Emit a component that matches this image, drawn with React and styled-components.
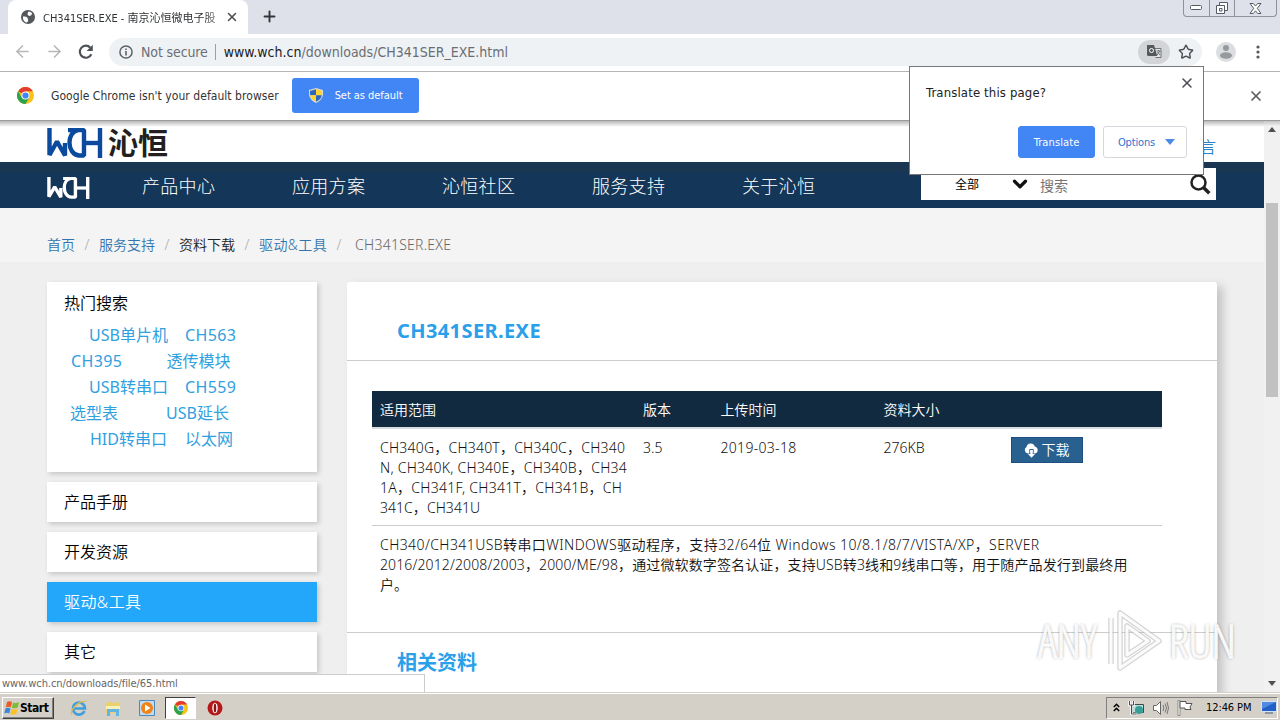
import React from 'react';
import styled, { createGlobalStyle, css } from 'styled-components';
import { X, Plus, ArrowLeft, ArrowRight, Star, ChevronDown } from 'lucide-react';

const uiFont = '"DejaVu Sans Condensed", "Noto Sans CJK SC", sans-serif';
const pageFont = '"Noto Sans", "Noto Sans CJK SC", sans-serif';

const navItems = ['产品中心', '应用方案', '沁恒社区', '服务支持', '关于沁恒'];

const hotRows = [
  { pad: 25, gap: 17, tags: ['USB单片机', 'CH563'] },
  { pad: 7, gap: 44, tags: ['CH395', '透传模块'] },
  { pad: 25, gap: 17, tags: ['USB转串口', 'CH559'] },
  { pad: 6, gap: 48, tags: ['选型表', 'USB延长'] },
  { pad: 26, gap: 18, tags: ['HID转串口', '以太网'] },
];

const sideLinks = [
  { label: '产品手册' },
  { label: '开发资源' },
  { label: '驱动&工具', active: true },
  { label: '其它' },
];

const chips = [
  ['CH340G，CH340T，CH340C，CH340', 0.21],
  ['N, CH340K, CH340E，CH340B，CH34', 0.24],
  ['1A，CH341F, CH341T，CH341B，CH', 0.26],
  ['341C，CH341U', 0.04],
];

function ChromeLogo({ size }) {
  return (
    <svg width={size} height={size} viewBox="0 0 24 24">
      <circle cx="12" cy="12" r="12" fill="#fbc116" />
      <path d="M12 12 1.6 6A12 12 0 0 1 22.4 6H12Z" fill="#e33b2e" />
      <path d="M1.6 6A12 12 0 0 0 12 24l5.2-9L12 12 6.8 15Z" fill="#2ba24c" />
      <circle cx="12" cy="12" r="5.6" fill="#fff" />
      <circle cx="12" cy="12" r="4.4" fill="#4285f4" />
    </svg>
  );
}

function WchMark({ width, height, color, weight }) {
  return (
    <svg width={width} height={height} viewBox="0 0 56 30" preserveAspectRatio="none">
      <g fill="none" stroke={color} strokeWidth={weight} strokeLinejoin="bevel">
        <path d="M2.500 0V27L10 13.500L18 27.500V15" />
        <path d="M21 2H37V27.500H32C19.500 26 19.500 4 31 2" />
        <path d="M37 15H53" />
        <path d="M53 0V30" />
      </g>
    </svg>
  );
}

function TabStrip() {
  return (
    <Strip>
      <Tab>
        <svg width="14" height="14" viewBox="0 0 14 14">
          <circle cx="7" cy="7" r="7" fill="#54585c" />
          <path d="M2 6.500c2 .3 4-.2 4.500 1.500s1 1.500.5 3-1 1.500-2 1.500C3 11.500 1.500 9.500 2 6.500ZM7 2c1.500-.6 3 0 4.200 1.400L10 5.500 8 6 6.500 4.500Z" fill="#fff" />
        </svg>
        <TabTitle>CH341SER.EXE - 南京沁恒微电子股</TabTitle>
        <X size={14} strokeWidth={2.600} color="#4b4f53" />
      </Tab>
      <NewTab><Plus size={17} strokeWidth={2.700} color="#33363a" /></NewTab>
      <WindowButtons>
        <WindowButton $w={25}>
          <svg width="13" height="6" viewBox="0 0 13 6"><rect x=".5" y=".5" width="11" height="4" rx="1" fill="#fff" stroke="#555b66" /></svg>
        </WindowButton>
        <WindowButton $w={25}>
          <svg width="14" height="13" viewBox="0 0 14 13" fill="#fff" stroke="#555b66">
            <path d="M4.500.5h8v8h-8z" /><path d="M1.500 3.500h8v8h-8z" /><path d="M4.500 6.500h2.500v2.500h-2.500z" />
          </svg>
        </WindowButton>
        <WindowButton $w={42}>
          <svg width="13" height="11" viewBox="0 0 13 11">
            <path d="M1 .5h3.300L6.500 3 8.700.5H12L8.300 5.300 12 10.500H8.700L6.500 7.800 4.300 10.500H1l3.700-5.200Z" fill="#fff" stroke="#555b66" />
          </svg>
        </WindowButton>
      </WindowButtons>
    </Strip>
  );
}

function Toolbar() {
  return (
    <Bar>
      <ToolIcon $w={32}><ArrowLeft size={19} color="#b4b6b9" strokeWidth={2} /></ToolIcon>
      <ToolIcon $w={32}><ArrowRight size={19} color="#b4b6b9" strokeWidth={2} /></ToolIcon>
      <ToolIcon $w={32}>
        <svg width="16" height="16" viewBox="0 0 16 16">
          <path d="M13.300 10.200A6 6 0 1 1 12.300 3.700" fill="none" stroke="#4e5256" strokeWidth="2.200" />
          <path d="M14.800.8V7H8.600Z" fill="#4e5256" />
        </svg>
      </ToolIcon>
      <Omnibox>
        <svg width="14" height="14" viewBox="0 0 14 14">
          <circle cx="7" cy="7" r="6.100" fill="none" stroke="#5f6368" strokeWidth="1.500" />
          <path d="M7 6v4.500M7 3.500v1.500" stroke="#5f6368" strokeWidth="1.600" />
        </svg>
        <Secure>Not secure</Secure>
        <Divider />
        <Url><b>www.wch.cn</b>/downloads/CH341SER_EXE.html</Url>
        <TranslateChip>
          <svg width="15" height="14" viewBox="0 0 15 14">
            <path d="M7 3.500h7v9H8.500" fill="#e4e5e7" stroke="#707377" />
            <path d="M0 0h7l3.300 11H1.500Q0 11 0 9.500Z" fill="#55595e" />
            <circle cx="4.500" cy="5.500" r="2" fill="none" stroke="#fff" />
            <path d="M9.500 6h4M11.500 5v1M10 10l3-4M10.500 7l2.500 3" stroke="#707377" fill="none" />
          </svg>
        </TranslateChip>
        <Star size={16} strokeWidth={2.200} color="#4e5256" />
      </Omnibox>
      <Avatar>
        <svg width="20" height="20" viewBox="0 0 20 20">
          <circle cx="10" cy="10" r="10" fill="#dcdde0" />
          <circle cx="10" cy="6" r="3" fill="#96999d" />
          <ellipse cx="10" cy="13.500" rx="6" ry="3.200" fill="#96999d" />
        </svg>
      </Avatar>
      <svg width="4" height="14" viewBox="0 0 4 14" fill="#55595d">
        <circle cx="2" cy="2" r="1.600" /><circle cx="2" cy="7" r="1.600" /><circle cx="2" cy="12" r="1.600" />
      </svg>
    </Bar>
  );
}

function InfoBar() {
  return (
    <Info>
      <ChromeLogo size={17} />
      <InfoText>Google Chrome isn't your default browser</InfoText>
      <DefaultButton>
        <svg width="14" height="15" viewBox="0 0 14 15">
          <path d="M7 0 14 2V7Q13 12 7 15Q1 12 0 7V2Z" fill="#d8dbd0" />
          <path d="M7 1.200V7.300H1.100L1 3Z" fill="#2f66bd" /><path d="M7 1.200V7.300H12.900L13 3Z" fill="#ffd52e" />
          <path d="M1.100 7.300H7V13.800Q2 11.500 1.100 7.300Z" fill="#ffd52e" /><path d="M12.900 7.300H7V13.800Q12 11.500 12.900 7.300Z" fill="#2f66bd" />
        </svg>
        Set as default
      </DefaultButton>
      <InfoClose><X size={16} strokeWidth={2.600} color="#5a5d61" /></InfoClose>
    </Info>
  );
}

function TranslatePopup() {
  return (
    <Popup>
      <PopupTop>
        <PopupTitle>Translate this page?</PopupTitle>
        <X size={16} strokeWidth={2.300} color="#4b4f53" />
      </PopupTop>
      <PopupActions>
        <PopupButton $primary>Translate</PopupButton>
        <PopupButton>
          Options
          <svg width="10" height="6" viewBox="0 0 10 6"><path d="M0 0h10L5 6Z" fill="#4b8ae8" /></svg>
        </PopupButton>
      </PopupActions>
    </Popup>
  );
}

function Sidebar() {
  return (
    <Side>
      <HotCard>
        <HotTitle>热门搜索</HotTitle>
        {hotRows.map((row) => (
          <HotRow key={row.tags[0]} $pad={row.pad} $gap={row.gap}>
            {row.tags.map((tag) => <HotTag key={tag} $wide={tag.startsWith('CH')}>{tag}</HotTag>)}
          </HotRow>
        ))}
      </HotCard>
      {sideLinks.map((item) => (
        <SideLink key={item.label} $active={item.active}>{item.label}</SideLink>
      ))}
    </Side>
  );
}

function Detail() {
  return (
    <Panel>
      <PanelTitle>CH341SER.EXE</PanelTitle>
      <TableArea>
        <HeadRow>
          <span>适用范围</span>
          <span>版本</span>
          <span>上传时间</span>
          <span>资料大小</span>
          <span />
        </HeadRow>
        <DataRow>
          <div>
            {chips.map(([line, spacing]) => <ChipLine key={line} $spacing={spacing}>{line}</ChipLine>)}
          </div>
          <span>3.5</span>
          <DateCell>2019-03-18</DateCell>
          <span>276KB</span>
          <Download>
            <svg width="15" height="15" viewBox="0 0 15 15">
              <path d="M4 10.500A3.500 3.500 0 0 1 2.500 4 4.300 4.300 0 0 1 10.800 3.500 3.600 3.600 0 0 1 11 10.500Z" fill="#fff" />
              <path d="M5.800 11V6.500h3.400V11" stroke="#286090" fill="none" />
              <path d="M6.500 7h2v4h2.500L7.500 14.800 4 11h2.500Z" fill="#fff" />
            </svg>
            下载
          </Download>
        </DataRow>
        <Description>
          <DescLine $spacing={0.42}>CH340/CH341USB转串口WINDOWS驱动程序，支持32/64位 Windows 10/8.1/8/7/VISTA/XP，SERVER</DescLine>
          <DescLine $spacing={0.13}>2016/2012/2008/2003，2000/ME/98，通过微软数字签名认证，支持USB转3线和9线串口等，用于随产品发行到最终用</DescLine>
          <DescLine>户。</DescLine>
        </Description>
      </TableArea>
      <Related>相关资料</Related>
    </Panel>
  );
}

function Watermark() {
  return (
    <Mark>
      <span>ANY</span>
      <svg width="60" height="66" viewBox="0 0 60 66">
        <g fill="none" strokeLinejoin="round">
          <path d="M6 10V56M15 5V60L54 33ZM22 18V47L43 33Z" stroke="#b0b0b0" strokeWidth="5.500" opacity=".55" />
          <path d="M6 10V56M15 5V60L54 33ZM22 18V47L43 33Z" stroke="#fff" strokeWidth="3" opacity=".9" />
        </g>
      </svg>
      <span>RUN</span>
    </Mark>
  );
}

function Taskbar() {
  return (
    <Task>
      <StartButton>
        <svg width="16" height="16" viewBox="0 0 16 16">
          <path d="M3 2Q5.500.5 8 2L6.800 7.300Q4.300 6 1.800 7.300Z" fill="#ec5b25" />
          <path d="M9 2.400Q12 3.800 15 2L13.800 7.500Q11 9 7.800 7.700Z" fill="#7fbb38" />
          <path d="M1.500 8.500Q4 7 6.500 8.400L5.300 13.500Q3 12.200.3 13.500Z" fill="#3b86d8" />
          <path d="M7.600 8.900Q10.500 10 13.500 8.700L12.200 14Q9.500 15.500 6.400 14Z" fill="#fcc021" />
        </svg>
        Start
      </StartButton>
      <TaskIcon $w={34}>
        <svg width="18" height="18" viewBox="0 0 18 18">
          <path d="M14.500 12A6 6 0 1 1 15 9.500H4" fill="none" stroke="#3f9fdc" strokeWidth="2.600" />
          <path d="M2 15.500C-.5 12 8 1.500 16 2.500" fill="none" stroke="#e5bb45" strokeWidth="1.300" />
        </svg>
      </TaskIcon>
      <TaskIcon $w={34}>
        <svg width="16" height="16" viewBox="0 0 16 16">
          <path d="M1 3 6 1.500l1 1.500 8-1v11H1Z" fill="#ecd06a" /><path d="M1 6h14v3H1Z" fill="#faf0ba" />
          <path d="M2 9h12v7h-3v-4H5v4H2Z" fill="#63b4df" />
        </svg>
      </TaskIcon>
      <TaskIcon $w={34}>
        <svg width="16" height="16" viewBox="0 0 16 16">
          <path d="M.5.5h15v15H.5z" fill="#c1dcf2" stroke="#4c88bc" />
          <circle cx="8" cy="8" r="6" fill="#ef8318" /><path d="M6 4.500v7L11.500 8Z" fill="#fff" />
        </svg>
      </TaskIcon>
      <ActiveTask><ChromeLogo size={14} /></ActiveTask>
      <TaskIcon $w={37}>
        <svg width="16" height="16" viewBox="0 0 16 16">
          <circle cx="8" cy="8" r="7.500" fill="#b51818" /><ellipse cx="8" cy="8" rx="2.700" ry="5.200" fill="#fff" />
          <ellipse cx="8" cy="8" rx="1.300" ry="4.500" fill="#8c1212" />
        </svg>
      </TaskIcon>
      <Tray>
        <svg width="7" height="9" viewBox="0 0 7 9"><path d="M.8 4 3.500 1.300 6.200 4M.8 8 3.500 5.300 6.200 8" stroke="#000" strokeWidth="1.500" fill="none" /></svg>
        <svg width="17" height="16" viewBox="0 0 17 16">
          <path d="M4.500 4.500h11v8h-11z" fill="#b5dfdc" stroke="#404a4a" />
          <circle cx="11" cy="10" r="4" fill="#36a098" />
          <path d="M1.500 1v4h4V1M3.500 5v9h5" fill="none" stroke="#fff" strokeWidth="2.500" />
          <path d="M1.500 1v4h4V1M3.500 5v9h5" fill="none" stroke="#4a4a4a" />
        </svg>
        <svg width="16" height="14" viewBox="0 0 16 14">
          <path d="M.5 4.500h3l4-4v13l-4-4h-3Z" fill="#fff" stroke="#666" />
          <path d="M10 4q1.600 3 0 6M12 2.500q3 4.500 0 9M14 1q3 6 0 12" stroke="#777" fill="none" />
        </svg>
        <svg width="16" height="16" viewBox="0 0 16 16">
          <path d="M1 .5h2v15H1z" fill="#fff" stroke="#777" strokeWidth=".8" />
          <path d="M3 1.500h6v2h6l-2 3.500 1 2.500H8v-1.500H3Z" fill="#fff" stroke="#555" />
        </svg>
        <Clock>12:46 PM</Clock>
        <svg width="16" height="13" viewBox="0 0 16 13">
          <path d="M.5.5h15v10H.5z" fill="#2161c5" stroke="#d5e3f7" /><path d="M1 1h14L1 8Z" fill="#4f8be0" /><path d="M4 12h8" stroke="#4a5a7a" />
        </svg>
      </Tray>
    </Task>
  );
}

export default function App() {
  return (
    <Screen>
      <GlobalStyle />
      <TabStrip />
      <Toolbar />
      <InfoBar />
      <Viewport>
        <Site>
          <SiteHeader>
            <WchMark width={56} height={30} color="#0b4a9c" weight={4.4} />
            <Brand>沁恒</Brand>
            <Language>语言</Language>
          </SiteHeader>
          <Nav>
            <NavLogo><WchMark width={43} height={22} color="#fff" weight={4.4} /></NavLogo>
            {navItems.map((item) => <NavItem key={item}>{item}</NavItem>)}
            <SearchBox>
              <Scope>全部</Scope>
              <ChevronDown size={22} strokeWidth={3.500} color="#111" />
              <Placeholder>搜索</Placeholder>
              <svg width="21" height="21" viewBox="0 0 21 21" fill="none" stroke="#222">
                <circle cx="8.500" cy="8.500" r="7" strokeWidth="2.500" />
                <path d="M13.500 13.500 19.300 19.300" strokeWidth="3.500" />
              </svg>
            </SearchBox>
          </Nav>
          <Crumbs>
            <Crumb>首页</Crumb>
            <Slash>/</Slash>
            <Crumb>服务支持</Crumb>
            <Slash>/</Slash>
            <Crumb $color="#222">资料下载</Crumb>
            <Slash>/</Slash>
            <Crumb $spacing={0.4}>驱动&工具</Crumb>
            <Slash>/</Slash>
            <Crumb $color="#666" $indent={4} $spacing={0.25}>CH341SER.EXE</Crumb>
          </Crumbs>
          <Columns>
            <Sidebar />
            <Detail />
          </Columns>
        </Site>
        <Scroll>
          <svg width="8" height="5" viewBox="0 0 8 5"><path d="M0 5 4 0l4 5Z" fill="#505050" /></svg>
          <Thumb />
          <svg width="8" height="5" viewBox="0 0 8 5"><path d="M0 0 4 5l4-5Z" fill="#505050" /></svg>
        </Scroll>
      </Viewport>
      <Taskbar />
      <StatusBubble>www.wch.cn/downloads/file/65.html</StatusBubble>
      <Watermark />
      <TranslatePopup />
    </Screen>
  );
}

const GlobalStyle = createGlobalStyle`
  * {
    box-sizing: border-box;
  }

  body {
    margin: 0;
    overflow: hidden;
  }

  svg {
    display: block;
    flex: none;
  }
`;

const Screen = styled.div`
  position: relative;
  display: flex;
  flex-direction: column;
  width: 1280px;
  height: 720px;
  overflow: hidden;
  white-space: nowrap;
  background: #fff;
  font-family: ${uiFont};
`;

const Strip = styled.div`
  display: flex;
  height: 34px;
  padding-left: 8px;
  background: #dee1e9;
`;

const Tab = styled.div`
  display: flex;
  align-items: center;
  width: 240px;
  padding: 0 9px 0 13px;
  background: #fff;
  border-radius: 8px 8px 0 0;
`;

const TabTitle = styled.div`
  flex: 1;
  margin-left: 8px;
  font-size: 11px;
  letter-spacing: 0;
  color: #303336;
  mask-image: linear-gradient(90deg, #000 88%, rgba(0, 0, 0, 0.3));
`;

const NewTab = styled.div`
  padding: 8px 13px;
`;

const WindowButtons = styled.div`
  display: flex;
  height: 17px;
  margin: 0 3px 0 auto;
  border: 1px solid #8d929d;
  border-top: 0;
  border-radius: 0 0 4px 4px;
`;

const WindowButton = styled.div`
  display: flex;
  align-items: center;
  justify-content: center;
  width: ${(props) => props.$w}px;

  & + & {
    border-left: 1px solid #8d929d;
  }
`;

const Bar = styled.div`
  display: flex;
  align-items: center;
  height: 38px;
  padding: 0 20px 2px 6px;
  border-bottom: 1px solid #b5b5b5;
`;

const ToolIcon = styled.div`
  display: flex;
  justify-content: center;
  width: ${(props) => props.$w}px;
`;

const Omnibox = styled.div`
  display: flex;
  flex: 1;
  align-items: center;
  height: 28px;
  margin-left: 7px;
  padding: 0 8px 0 10px;
  border-radius: 14px;
  background: #eff2f5;
  font-size: 14px;
  color: #6a6e73;
`;

const Secure = styled.span`
  margin-left: 8px;
  letter-spacing: -0.12px;
`;

const Divider = styled.span`
  width: 1px;
  height: 16px;
  margin: 0 8px 0 7px;
  background: #9b9ea2;
`;

const Url = styled.span`
  letter-spacing: 0;

  b {
    font-weight: 400;
    color: #202124;
  }
`;

const TranslateChip = styled.div`
  display: flex;
  align-items: center;
  justify-content: center;
  width: 32px;
  height: 24px;
  margin: 0 8px 0 auto;
  border-radius: 12px;
  background: #d2d4d7;
`;

const Avatar = styled.div`
  margin: 0 29px 0 14px;

  & + svg {
    margin-left: -9px;
  }
`;

const Info = styled.div`
  display: flex;
  align-items: center;
  height: 49px;
  padding: 0 16px 1px 17px;
  border-bottom: 1px solid #9b9b9b;
  font-size: 12px;
  color: #333;
`;

const InfoText = styled.span`
  margin-left: 17px;
  letter-spacing: 0.05px;
`;

const DefaultButton = styled.div`
  display: flex;
  align-items: center;
  gap: 12px;
  width: 127px;
  height: 35px;
  margin-left: 13px;
  padding-left: 17px;
  border-radius: 3px;
  background: #4285f4;
  font-size: 11px;
  letter-spacing: -0.05px;
  color: #fff;
`;

const InfoClose = styled.div`
  margin-left: auto;
`;

const Viewport = styled.div`
  display: flex;
  height: 571px;
  overflow: hidden;
`;

const Site = styled.div`
  display: flex;
  flex-direction: column;
  width: 1264px;
  background: #efefef;
  font-family: ${pageFont};
`;

const SiteHeader = styled.div`
  display: flex;
  flex: none;
  align-items: center;
  height: 41px;
  padding: 2px 48px 0 47px;
  background: linear-gradient(#b9b9b9, #fff 6px);
`;

const Brand = styled.span`
  margin-left: 5px;
  font-size: 30px;
  font-weight: 700;
  line-height: 40px;
  color: #231f20;
`;

const Language = styled.span`
  margin: 6px 0 0 auto;
  font-size: 16px;
  font-weight: 350;
  color: #2a82c4;
`;

const Nav = styled.div`
  display: flex;
  flex: none;
  align-items: center;
  height: 46px;
  padding: 0 48px 0 47px;
  background: linear-gradient(#1a3650 0 10px, #143658 10px);
`;

const NavLogo = styled.div`
  width: 95px;
  padding-top: 6px;
`;

const NavItem = styled.span`
  width: 150px;
  margin-top: -1px;
  font-size: 18px;
  font-weight: 300;
  letter-spacing: 0.3px;
  color: #fff;
`;

const SearchBox = styled.div`
  display: flex;
  align-items: center;
  width: 295px;
  height: 32px;
  margin: 0 0 2px auto;
  padding: 0 5px 0 34px;
  background: #fff;
`;

const Scope = styled.span`
  width: 54px;
  font-size: 12px;
  color: #000;
`;

const Placeholder = styled.span`
  flex: 1;
  margin: 2px 0 0 9px;
  font-size: 14px;
  color: #757575;
`;

const Crumbs = styled.div`
  display: flex;
  flex: none;
  height: 54px;
  padding: 27px 0 0 47px;
  background: #f4f4f4;
  font-size: 14px;
  font-weight: 350;
  line-height: 20px;
`;

const Crumb = styled.span`
  margin-left: ${(props) => props.$indent || 0}px;
  letter-spacing: ${(props) => props.$spacing || 0}px;
  color: ${(props) => props.$color || '#3374ae'};
`;

const Slash = styled.span`
  width: 24px;
  text-align: center;
  color: #aaa;
`;

const Columns = styled.div`
  display: flex;
  gap: 30px;
  padding: 20px 0 0 47px;
`;

const Side = styled.div`
  display: flex;
  flex-direction: column;
  gap: 10px;
  width: 270px;
`;

const card = css`
  background: #fff;
  box-shadow: 2px 2px 5px rgba(0, 0, 0, 0.18);
`;

const HotCard = styled.div`
  ${card}
  height: 190px;
  padding: 8px 17px;
  font-size: 16px;
`;

const HotTitle = styled.div`
  height: 32px;
  font-weight: 350;
  line-height: 26px;
  color: #000;
`;

const HotRow = styled.div`
  display: flex;
  gap: ${(props) => props.$gap}px;
  height: 26px;
  padding-left: ${(props) => props.$pad}px;
  line-height: 26px;
  color: #2fa0e0;
`;

const HotTag = styled.span`
  letter-spacing: ${(props) => (props.$wide ? 0.4 : 0)}px;
`;

const SideLink = styled.div`
  ${card}
  height: 40px;
  padding-left: 17px;
  font-size: 16px;
  font-weight: 350;
  line-height: 41px;
  color: #000;

  ${(props) => props.$active && css`
    background: #22a7fb;
    letter-spacing: 0.4px;
    color: #fff;
  `}
`;

const Panel = styled.div`
  ${card}
  width: 870px;
  height: 430px;
  border-radius: 3px 3px 0 0;
  box-shadow: 6px 4px 10px rgba(0, 0, 0, 0.18);
`;

const PanelTitle = styled.div`
  height: 79px;
  padding-left: 50px;
  border-bottom: 1px solid #ccc;
  font-size: 20px;
  font-weight: 700;
  line-height: 97px;
  letter-spacing: 0.4px;
  color: #2aa0ea;
`;

const TableArea = styled.div`
  width: 790px;
  height: 272px;
  margin: 30px 0 0 25px;
  font-size: 14px;
  font-weight: 350;
  line-height: 20px;
  color: #111;
`;

const row = css`
  display: grid;
  grid-template-columns: 263px 77.500px 163px 127px 1fr;
  padding: 0 8px;
`;

const HeadRow = styled.div`
  ${row}
  height: 38px;
  border-bottom: 2px solid #d8dde2;
  background: #122a40;
  background-clip: padding-box;
  line-height: 38px;
  color: #fff;
`;

const DataRow = styled.div`
  ${row}
  height: 97px;
  padding-top: 9px;
  border-bottom: 1px solid #ccc;
`;

const ChipLine = styled.div`
  letter-spacing: ${(props) => props.$spacing}px;
`;

const DateCell = styled.span`
  letter-spacing: 0.3px;
`;

const Download = styled.div`
  display: flex;
  align-items: center;
  justify-content: center;
  gap: 3px;
  width: 72px;
  height: 26px;
  margin-top: -1px;
  border: 1px solid #1d5080;
  background: #286090;
  color: #fff;
`;

const Description = styled.div`
  padding: 9px 8px;
`;

const DescLine = styled.div`
  letter-spacing: ${(props) => props.$spacing || 0}px;
`;

const Related = styled.div`
  margin-top: -31px;
  padding-left: 50px;
  border-top: 1px solid #ccc;
  font-size: 20px;
  font-weight: 700;
  line-height: 59px;
  color: #2aa0ea;
`;

const Scroll = styled.div`
  display: flex;
  flex-direction: column;
  align-items: center;
  width: 16px;
  padding: 6px 0;
  background: linear-gradient(#c4c4c4, #f1f1f1 5px);
`;

const Thumb = styled.div`
  width: 12px;
  height: 194px;
  margin: 71px 0 auto;
  background: #c1c1c1;
`;

const Popup = styled.div`
  position: absolute;
  top: 66px;
  left: 909px;
  width: 295px;
  height: 109px;
  padding: 8px 16px 0;
  border: 1px solid #777;
  background: #fff;
`;

const PopupTop = styled.div`
  display: flex;
  justify-content: space-between;
  height: 51px;
  margin-right: -8px;
`;

const PopupTitle = styled.span`
  padding-top: 10px;
  font-size: 13px;
  letter-spacing: 0.15px;
  color: #222;
`;

const PopupActions = styled.div`
  display: flex;
  justify-content: flex-end;
  gap: 8px;
`;

const PopupButton = styled.div`
  display: flex;
  align-items: center;
  justify-content: center;
  gap: 10px;
  width: ${(props) => (props.$primary ? 77 : 84)}px;
  height: 32px;
  padding-left: ${(props) => (props.$primary ? 0 : 3)}px;
  border: 1px solid ${(props) => (props.$primary ? '#4285f4' : '#d5d8dc')};
  border-radius: 3px;
  background: ${(props) => (props.$primary ? '#4285f4' : '#fff')};
  font-size: 11px;
  letter-spacing: ${(props) => (props.$primary ? 0.1 : -0.15)}px;
  color: ${(props) => (props.$primary ? '#fff' : '#2c73d2')};
`;

const StatusBubble = styled.div`
  position: absolute;
  top: 674px;
  left: 0;
  width: 425px;
  height: 18px;
  padding: 1px 0 0 2px;
  border-top: 1px solid #ccc;
  border-right: 1px solid #ccc;
  background: #fff;
  font-size: 11px;
  line-height: 16px;
  letter-spacing: -0.05px;
  color: #666;
`;

const Mark = styled.div`
  position: absolute;
  top: 608px;
  left: 1038px;
  display: flex;
  align-items: center;
  gap: 4px;
  height: 66px;
  font-family: "Open Sans", sans-serif;
  font-size: 46px;
  font-stretch: 75%;
  font-weight: 300;
  line-height: 64px;
  color: rgba(255, 255, 255, 0.9);
  -webkit-text-stroke: 1.4px rgba(255, 255, 255, 0.8);
  text-shadow: 0 0 3px rgba(0, 0, 0, 0.55);

  span {
    width: 63px;
    padding-bottom: 3px;
  }
`;

const Task = styled.div`
  display: flex;
  align-items: center;
  height: 28px;
  padding: 2px 2px 0;
  border-top: 1px solid #d4d0c8;
  background: #d4d0c8;
  box-shadow: inset 0 1px 0 #fff;
`;

const StartButton = styled.div`
  display: flex;
  align-items: center;
  width: 52px;
  height: 22px;
  margin-right: 8px;
  padding-left: 1px;
  border: 1px solid;
  border-color: #fff #404040 #404040 #fff;
  box-shadow: inset -1px -1px 0 #808080;
  font-size: 12px;
  font-weight: 700;
  letter-spacing: -0.45px;
  color: #000;
`;

const TaskIcon = styled.div`
  display: flex;
  justify-content: center;
  width: ${(props) => props.$w}px;
`;

const ActiveTask = styled.div`
  display: flex;
  align-items: center;
  justify-content: center;
  width: 31px;
  height: 22px;
  margin-left: 1px;
  border: 1px solid;
  border-color: #404040 #fff #fff #404040;
  background: #fff;
`;

const Tray = styled.div`
  display: flex;
  align-items: center;
  gap: 8px;
  width: 172px;
  height: 22px;
  margin-left: auto;
  padding-left: 6px;
  border: 1px solid;
  border-color: #808080 #fff #fff #808080;
`;

const Clock = styled.span`
  width: 47px;
  margin: 0 1px 0 5px;
  font-size: 11px;
  letter-spacing: -0.1px;
  color: #000;
`;
